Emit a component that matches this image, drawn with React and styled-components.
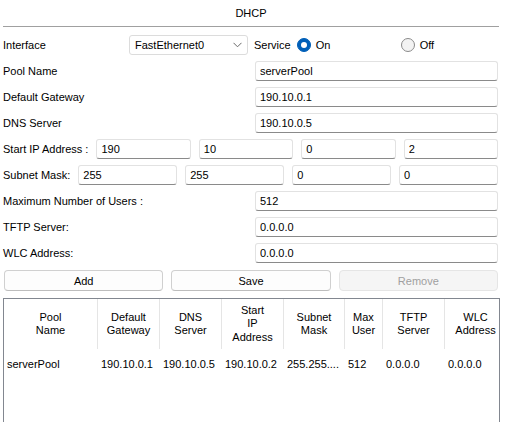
import React from 'react';
import styled, { createGlobalStyle } from 'styled-components';

const Global = createGlobalStyle`
  html, body { margin: 0; padding: 0; background: #fff; overflow: hidden; }
  body { font-family: "Liberation Sans", Arial, sans-serif; font-size: 11px; color: #000; }
  * { box-sizing: border-box; }
`;

const Page = styled.div`
  width: 515px;
  height: 422px;
  overflow: hidden;
  background: #fff;
  display: flex;
  flex-direction: column;
`;

const Title = styled.div`
  flex-shrink: 0;
  margin: 0 16px 0 3px;
  height: 27px;
  line-height: 26px;
  text-align: center;
  border-bottom: 1px solid #a0a0a0;
`;

const Form = styled.div`
  display: flex;
  flex-direction: column;
  gap: 6px;
  padding: 8px 17px 0 3px;
  flex-shrink: 0;
`;

const Row = styled.div`
  display: flex;
  align-items: center;
  height: 20px;
  gap: ${(p) => p.$gap || 0}px;
`;

const Label = styled.span`
  flex: ${(p) => (p.$width ? `0 0 ${p.$width}px` : '1 1 auto')};
  white-space: nowrap;
`;

const Field = styled.input`
  height: 20px;
  width: ${(p) => (p.$width ? `${p.$width}px` : 'auto')};
  flex: ${(p) => (p.$width ? `0 0 ${p.$width}px` : '1 1 0')};
  min-width: 0;
  margin: 0;
  padding: 0 4px;
  font: inherit;
  color: #000;
  background: #fff;
  border: 1px solid #e2e2e2;
  border-bottom-color: #8a8a8a;
  border-radius: 3px;
  outline: none;
`;

const Select = styled.div`
  flex: 0 0 119px;
  height: 20px;
  display: flex;
  align-items: center;
  justify-content: space-between;
  padding: 0 5px 0 5px;
  border: 1px solid #dcdcdc;
  border-radius: 3px;
  background: #fff;
`;

const ServiceLabel = styled.span`
  margin-left: 6px;
  white-space: nowrap;
`;

const RadioOption = styled.label`
  display: flex;
  align-items: center;
  gap: 5px;
  width: ${(p) => p.$width}px;
  margin-left: ${(p) => p.$offset || 0}px;
`;

const RadioDot = styled.span`
  width: 14px;
  height: 14px;
  border-radius: 50%;
  flex-shrink: 0;
  display: flex;
  align-items: center;
  justify-content: center;
  background: ${(p) => (p.$checked ? '#005fb8' : '#f3f3f3')};
  border: 1px solid ${(p) => (p.$checked ? '#005fb8' : '#8a8a8a')};
  &::after {
    content: '';
    display: ${(p) => (p.$checked ? 'block' : 'none')};
    width: 6px;
    height: 6px;
    border-radius: 50%;
    background: #fff;
  }
`;

const ButtonRow = styled.div`
  display: grid;
  grid-template-columns: repeat(3, 1fr);
  gap: 8px;
  margin-top: 1px;
  padding-left: 1px;
  height: 21px;
`;

const Button = styled.button`
  height: 21px;
  margin: 0;
  padding: 0;
  font: inherit;
  border-radius: 4px;
  background: ${(p) => (p.disabled ? '#f5f5f5' : '#fdfdfd')};
  color: ${(p) => (p.disabled ? '#a0a0a0' : '#000')};
  border: 1px solid ${(p) => (p.disabled ? '#e5e5e5' : '#d0d0d0')};
  border-bottom-color: ${(p) => (p.disabled ? '#e5e5e5' : '#bdbdbd')};
`;

const Table = styled.div`
  flex-shrink: 0;
  margin: 7px 0 0 3px;
  width: 497px;
  height: 140px;
  border: 1px solid #828790;
  overflow: hidden;
  background: #fff;
`;

const COLS = '94px 62px 62px 62px 61px 38px 62px 62px';

const HeaderRow = styled.div`
  display: grid;
  grid-template-columns: ${COLS};
  height: 50px;
`;

const HeaderCell = styled.div`
  display: flex;
  align-items: center;
  justify-content: center;
  text-align: center;
  line-height: 13.5px;
  border-right: 1px solid #e5e5e5;
`;

const DataRow = styled.div`
  display: grid;
  grid-template-columns: ${COLS};
  height: 20px;
  margin-top: 5px;
  align-items: center;
`;

const DataCell = styled.div`
  padding-left: 3px;
  white-space: nowrap;
  overflow: hidden;
`;

const Chevron = () => (
  <svg width="9" height="6" viewBox="0 0 9 6">
    <path d="M0.5 0.8 L4.5 4.8 L8.5 0.8" fill="none" stroke="#6a6a6a" strokeWidth="1" />
  </svg>
);

const headers = [
  ['Pool', 'Name'],
  ['Default', 'Gateway'],
  ['DNS', 'Server'],
  ['Start', 'IP', 'Address'],
  ['Subnet', 'Mask'],
  ['Max', 'User'],
  ['TFTP', 'Server'],
  ['WLC', 'Address'],
];

const rows = [
  ['serverPool', '190.10.0.1', '190.10.0.5', '190.10.0.2', '255.255....', '512', '0.0.0.0', '0.0.0.0'],
];

export default function App() {
  return (
    <Page>
      <Global />
      <Title>DHCP</Title>
      <Form>
        <Row>
          <Label $width={126}>Interface</Label>
          <Select>
            <span>FastEthernet0</span>
            <Chevron />
          </Select>
          <ServiceLabel>Service</ServiceLabel>
          <RadioOption $width={104} $offset={6}>
            <RadioDot $checked />
            <span>On</span>
          </RadioOption>
          <RadioOption $width={60}>
            <RadioDot />
            <span>Off</span>
          </RadioOption>
        </Row>
        <Row>
          <Label>Pool Name</Label>
          <Field $width={243} defaultValue="serverPool" readOnly />
        </Row>
        <Row>
          <Label>Default Gateway</Label>
          <Field $width={243} defaultValue="190.10.0.1" readOnly />
        </Row>
        <Row>
          <Label>DNS Server</Label>
          <Field $width={243} defaultValue="190.10.0.5" readOnly />
        </Row>
        <Row $gap={8}>
          <Label $width={83}>Start IP Address :</Label>
          <Field defaultValue="190" readOnly />
          <Field defaultValue="10" readOnly />
          <Field defaultValue="0" readOnly />
          <Field defaultValue="2" readOnly />
        </Row>
        <Row $gap={8}>
          <Label $width={64}>Subnet Mask:</Label>
          <Field defaultValue="255" readOnly />
          <Field defaultValue="255" readOnly />
          <Field defaultValue="0" readOnly />
          <Field defaultValue="0" readOnly />
        </Row>
        <Row>
          <Label>Maximum Number of Users :</Label>
          <Field $width={243} defaultValue="512" readOnly />
        </Row>
        <Row>
          <Label>TFTP Server:</Label>
          <Field $width={243} defaultValue="0.0.0.0" readOnly />
        </Row>
        <Row>
          <Label>WLC Address:</Label>
          <Field $width={243} defaultValue="0.0.0.0" readOnly />
        </Row>
        <ButtonRow>
          <Button>Add</Button>
          <Button>Save</Button>
          <Button disabled>Remove</Button>
        </ButtonRow>
      </Form>
      <Table>
        <HeaderRow>
          {headers.map((h, i) => (
            <HeaderCell key={i}>
              <span>
                {h.map((w, j) => (
                  <React.Fragment key={j}>
                    {j > 0 && <br />}
                    {w}
                  </React.Fragment>
                ))}
              </span>
            </HeaderCell>
          ))}
        </HeaderRow>
        {rows.map((r, i) => (
          <DataRow key={i}>
            {r.map((c, j) => (
              <DataCell key={j}>{c}</DataCell>
            ))}
          </DataRow>
        ))}
      </Table>
    </Page>
  );
}
